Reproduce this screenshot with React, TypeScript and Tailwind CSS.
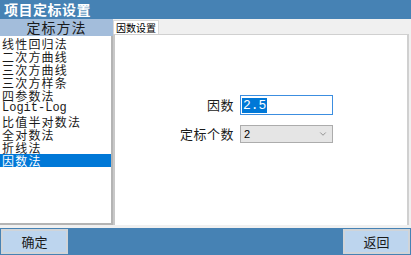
import { ChevronDown } from 'lucide-react'

const methods = [
  '线性回归法',
  '二次方曲线',
  '三次方曲线',
  '三次方样条',
  '四参数法',
  'Logit-Log',
  '比值半对数法',
  '全对数法',
  '折线法',
  '因数法',
]

const cjk = "font-['Noto_Sans_CJK_SC',sans-serif]"

const App = () => {
  return (
    <div className={`w-[411px] h-[255px] flex flex-col bg-[#f0f0f0] overflow-hidden ${cjk}`}>
      {/* Title bar */}
      <div className="h-[19px] bg-[#4682b4] text-white font-bold text-[14px] leading-[19px] pl-[4px] tracking-[0.5px]">
        项目定标设置
      </div>

      <div className="flex flex-1 min-h-0">
        {/* Method list */}
        <div className="w-[113px] flex flex-col">
          <div className="h-[17px] bg-[#a3bddb] text-[#1a1a1a] text-[14px] leading-[17px] text-center tracking-[1px]">
            定标方法
          </div>
          <div className="flex-1 bg-white border-r-2 border-b-2 border-[#b4b4b4] pt-[1px]">
            {methods.map((m, i) => (
              <div
                key={m}
                className={`h-[13px] leading-[13px] pl-[2px] ${
                  i === 9 ? 'bg-[#0078d7] text-white' : 'text-[#1a1a1a]'
                } ${
                  m === 'Logit-Log'
                    ? "font-['Liberation_Mono',monospace] text-[12px]"
                    : 'text-[12px] tracking-[1.2px]'
                }`}
              >
                {m}
              </div>
            ))}
          </div>
          <div className="h-[3px]" />
        </div>

        {/* Tab area */}
        <div className="flex-1 flex flex-col pt-[1px] pr-[2px]">
          <div className="flex">
            <div className="h-[14px] w-[46px] bg-white border-l border-t border-r border-[#d9d9d9] text-[10px] leading-[13px] pl-[2px] text-black whitespace-nowrap">
              因数设置
            </div>
          </div>
          <div className="flex-1 bg-white border-l-2 border-t border-r-2 border-[#d0d0d0] border-l-[#c8c8c8] flex flex-col items-start pt-[60px] pl-[62px] gap-[9px] mb-[3px]">
            <div className="flex items-center">
              <span className="w-[57px] text-right text-[13px] text-[#1a1a1a] tracking-[0.5px]">因数</span>
              <div className="ml-[6px] w-[93px] h-[20px] border border-[#3c8ee0] bg-white flex items-center pl-[1px]">
                <span className="bg-[#0078d7] text-white font-['Liberation_Mono',monospace] text-[13px] leading-[15px] px-[1px]">
                  2.5
                </span>
              </div>
            </div>
            <div className="flex items-center">
              <span className="w-[57px] text-right text-[13px] text-[#1a1a1a] tracking-[0.5px]">定标个数</span>
              <div className="ml-[6px] w-[93px] h-[18px] border border-[#acacac] bg-[#e5e5e5] flex items-center justify-between pl-[3px] pr-[4px]">
                <span className="text-[11px] font-['Liberation_Sans',sans-serif] text-black">2</span>
                <ChevronDown size={10} strokeWidth={1.5} className="text-[#606060]" />
              </div>
            </div>
          </div>
        </div>
      </div>

      {/* Bottom bar */}
      <div className="h-[27px] bg-[#4682b4] flex items-center justify-between px-[1px]">
        <button className="w-[67px] h-[25px] bg-[#bdd5ee] border-2 border-[#d0d4d8] text-[13px] text-[#1a1a1a]">
          确定
        </button>
        <button className="w-[67px] h-[25px] bg-[#bdd5ee] border-2 border-[#d0d4d8] text-[13px] text-[#1a1a1a]">
          返回
        </button>
      </div>
    </div>
  )
}

export default App
